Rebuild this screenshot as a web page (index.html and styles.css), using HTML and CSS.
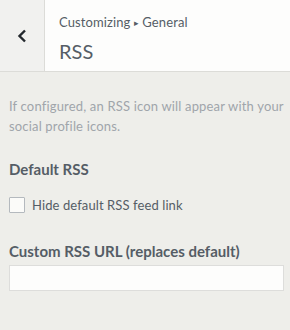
FILE: index.html
```html
<!DOCTYPE html>
<html lang="en">
  <head>
    <meta charset="UTF-8">
    <title>Customizing RSS</title>
    <link rel="stylesheet" href="styles.css">
  </head>
  <body>
    <div class="panel-header">
      <button class="customize-back" type="button" aria-label="Back">
        <svg width="12" height="14" viewBox="0 0 12 14">
          <path d="M9 1.5 L3.5 7 L9 12.5" fill="none" stroke="#23282d" stroke-width="2.4"/>
        </svg>
      </button>
      <div class="panel-title">
        <span class="crumb">Customizing <span class="crumb-sep">&#9656;</span> General</span>
        <h3>RSS</h3>
      </div>
    </div>
    <div class="panel-body">
      <p class="description">If configured, an RSS icon will appear with your social profile icons.</p>
      <div class="control">
        <span class="control-title">Default RSS</span>
        <label class="checkbox-row">
          <input type="checkbox">
          <span>Hide default RSS feed link</span>
        </label>
      </div>
      <div class="control control--url">
        <span class="control-title">Custom RSS URL (replaces default)</span>
        <input class="text-field" type="text">
      </div>
    </div>
  </body>
</html>
```

FILE: styles.css
```css
:root {
  font-family: Lato, "Noto Sans", sans-serif;
  color: #555d66;
  background-color: #eeeeea;
}

body {
  margin: 0;
  width: 290px;
  height: 330px;
  overflow: hidden;
}

.panel-header {
  display: flex;
  height: 71px;
  background: #fdfdfc;
  border-bottom: 1px solid #dcdcd8;
}

.customize-back {
  width: 45px;
  padding: 0;
  border: 0;
  border-right: 1px solid #dcdcd8;
  background: #f1f1ef;
  display: flex;
  align-items: center;
  justify-content: center;
}

.panel-title {
  padding: 12px 0 0 14px;
  display: flex;
  flex-direction: column;
}

.crumb {
  font-size: 13px;
  line-height: 20px;
  color: #555d66;
  letter-spacing: 0.1px;
}

.crumb-sep {
  font-size: 9px;
  position: relative;
  top: -1px;
}

.panel-title h3 {
  margin: 4px 0 0;
  font-size: 20px;
  font-weight: 400;
  line-height: 26px;
  color: #555d66;
}

.panel-body {
  padding: 0 6px 0 9px;
}

.description {
  margin: 24px 0 0;
  font-size: 13px;
  line-height: 20px;
  letter-spacing: 0.17px;
  color: #a0a5aa;
}

.control {
  margin-top: 23px;
  display: flex;
  flex-direction: column;
}

.control--url {
  margin-top: 26px;
}

.control-title {
  font-size: 15px;
  font-weight: 700;
  line-height: 20px;
  color: #555d66;
}

.checkbox-row {
  display: flex;
  align-items: center;
  gap: 7px;
  margin-top: 16px;
  font-size: 13px;
  line-height: 20px;
  letter-spacing: 0.1px;
  color: #555d66;
}

.checkbox-row input {
  appearance: none;
  margin: 0;
  width: 16px;
  height: 16px;
  border: 1px solid #b4b9be;
  border-radius: 1px;
  background: #fbfbf9;
}

.text-field {
  margin-top: 4px;
  width: 100%;
  height: 26px;
  box-sizing: border-box;
  border: 1px solid #dddddb;
  background: #fdfdfc;
}
```
